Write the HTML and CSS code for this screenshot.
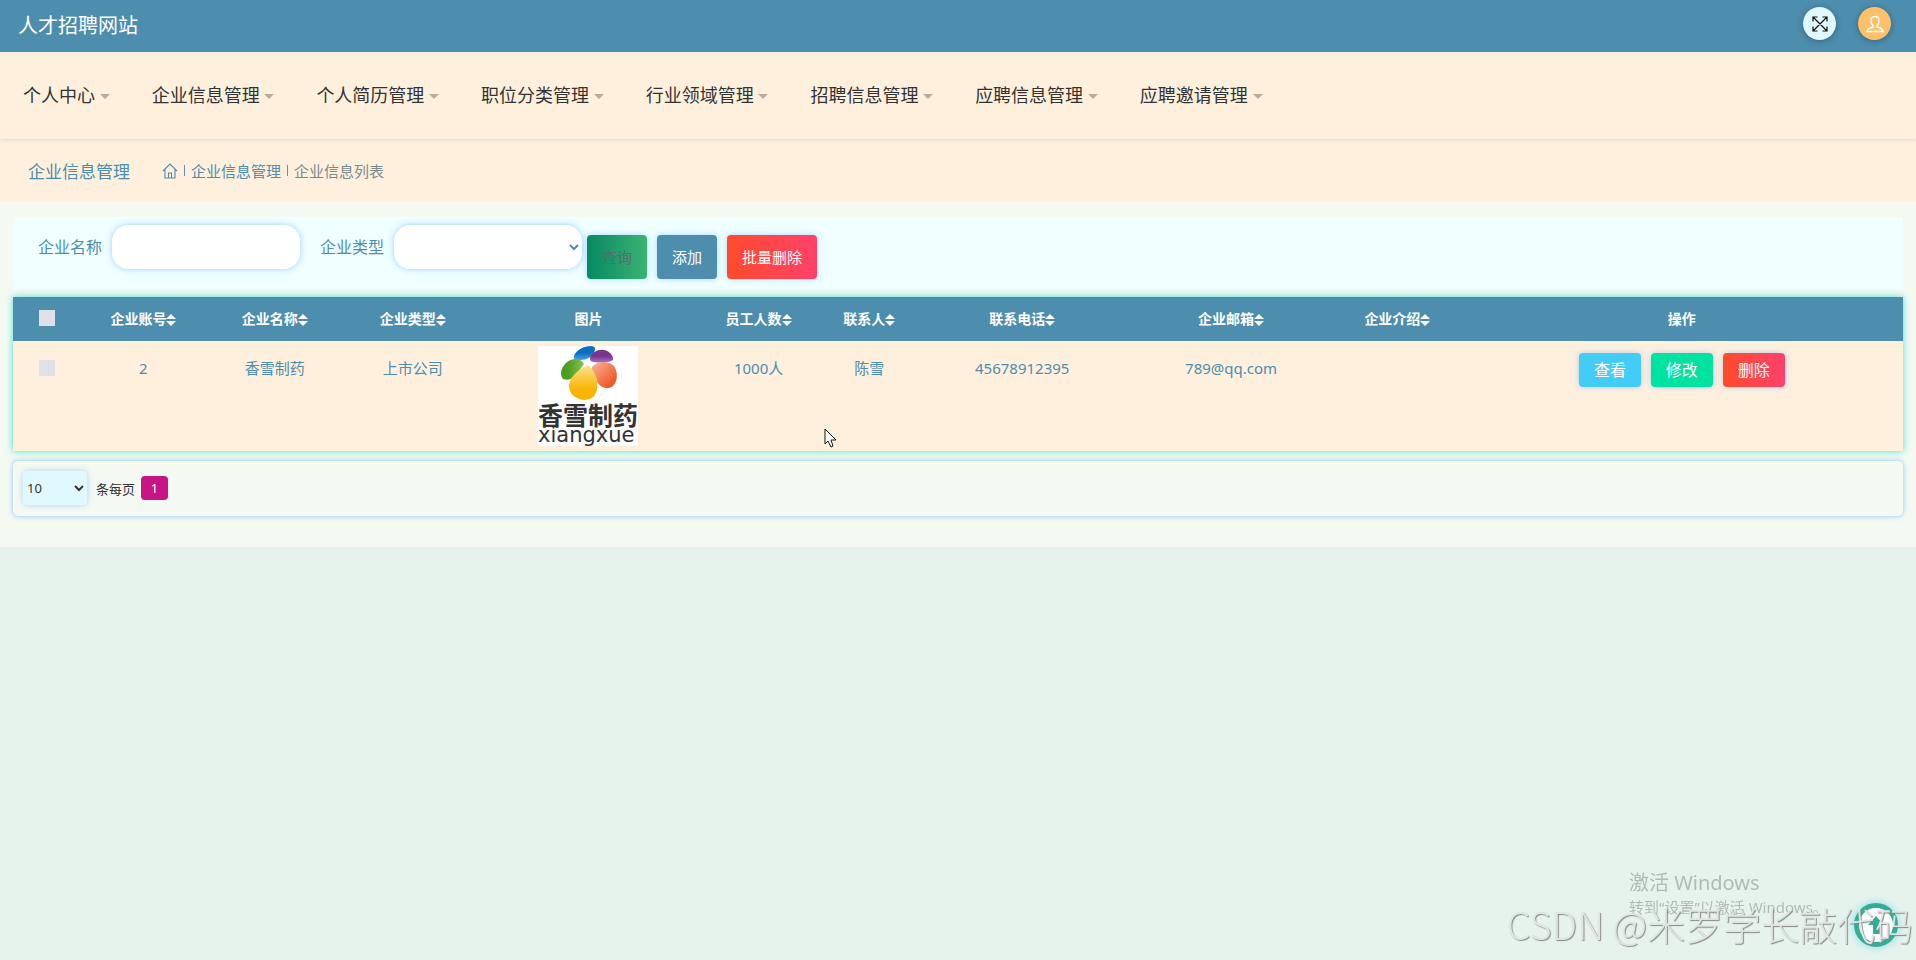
FILE: index.html
```html
<!DOCTYPE html>
<html lang="zh-CN">
<head>
	<meta charset="UTF-8">
	<meta name="viewport" content="width=device-width, initial-scale=1.0">
	<title>人才招聘网站</title>
	<link rel="stylesheet" href="styles.css">
</head>
<body>

	<header class="topbar">
		<h1 class="brand">人才招聘网站</h1>
		<div class="tools">
			<button class="tool tool-full" aria-label="全屏">
				<svg width="16" height="16" viewBox="0 0 16 16" fill="none" stroke="#111" stroke-width="1.2">
					<path d="M1 1L15 15M15 1L1 15M1 5.500V1H5.500M10.500 1H15V5.500M15 10.500V15H10.500M5.500 15H1V10.500" />
				</svg>
			</button>
			<button class="tool tool-user" aria-label="用户">
				<svg width="18" height="18" viewBox="0 0 18 18" fill="none" stroke="#fff" stroke-width="1.4">
					<path d="M7 10.500C5.500 9 5 7.500 5 5.500C5 3 6.500 1.500 9 1.500S13 3 13 5.500C13 7.500 12.500 9 11 10.500V12L15.500 13.500L17 16.500H1L2.500 13.500L7 12Z" />
				</svg>
			</button>
		</div>
	</header>

	<nav class="menu">
		<a href="#">个人中心 <span class="caret"></span></a>
		<a href="#">企业信息管理 <span class="caret"></span></a>
		<a href="#">个人简历管理 <span class="caret"></span></a>
		<a href="#">职位分类管理 <span class="caret"></span></a>
		<a href="#">行业领域管理 <span class="caret"></span></a>
		<a href="#">招聘信息管理 <span class="caret"></span></a>
		<a href="#">应聘信息管理 <span class="caret"></span></a>
		<a href="#">应聘邀请管理 <span class="caret"></span></a>
	</nav>

	<div class="crumbs">
		<h2>企业信息管理</h2>
		<a href="#" aria-label="首页">
			<svg width="16" height="16" viewBox="0 0 16 16" fill="none" stroke="#4d8dae" stroke-width="1.1">
				<path d="M1 8L8 1L15 8M3 6.500V15H13V6.500M6.500 15V10H9.500V15" />
			</svg>
		</a>
		<span class="sep"></span>
		<a href="#">企业信息管理</a>
		<span class="sep"></span>
		<span class="here">企业信息列表</span>
	</div>

	<main class="content">
		<form class="search">
			<label for="name">企业名称</label>
			<input type="text" id="name" class="field">
			<label for="type">企业类型</label>
			<select id="type" class="field"><option></option></select>
			<div class="search-buttons">
				<button type="button" class="btn query">查询</button>
				<button type="button" class="btn add">添加</button>
				<button type="button" class="btn del">批量删除</button>
			</div>
		</form>

		<table class="list">
			<colgroup>
				<col class="c-check"><col class="c-account"><col class="c-name"><col class="c-type">
				<col class="c-pic"><col class="c-staff"><col class="c-contact"><col class="c-phone">
				<col class="c-mail"><col class="c-intro"><col class="c-action">
			</colgroup>
			<thead>
				<tr>
					<th><input type="checkbox" aria-label="全选"></th>
					<th>企业账号<i class="sort"></i></th>
					<th>企业名称<i class="sort"></i></th>
					<th>企业类型<i class="sort"></i></th>
					<th>图片</th>
					<th>员工人数<i class="sort"></i></th>
					<th>联系人<i class="sort"></i></th>
					<th>联系电话<i class="sort"></i></th>
					<th>企业邮箱<i class="sort"></i></th>
					<th>企业介绍<i class="sort"></i></th>
					<th>操作</th>
				</tr>
			</thead>
			<tbody>
				<tr>
					<td><input type="checkbox" aria-label="选择"></td>
					<td>2</td>
					<td>香雪制药</td>
					<td>上市公司</td>
					<td class="pic">
						<svg width="100" height="100" viewBox="0 0 100 100">
							<defs>
								<linearGradient id="blue" x1="0" y1="0" x2="0" y2="1"><stop offset="0.5" stop-color="#0b6fc0" /><stop offset="1" stop-color="#4aa5dc" /></linearGradient>
								<linearGradient id="purple" x1="0" y1="0" x2="0" y2="1"><stop offset="0.5" stop-color="#783492" /><stop offset="1" stop-color="#a877bb" /></linearGradient>
								<linearGradient id="green" x1="0" y1="0" x2="1" y2="0"><stop offset="0.3" stop-color="#4c9e20" /><stop offset="1" stop-color="#8bc34f" /></linearGradient>
								<linearGradient id="red" x1="0" y1="0" x2="1" y2="1"><stop offset="0" stop-color="#f8b8a0" /><stop offset="0.8" stop-color="#ee5a26" /></linearGradient>
								<linearGradient id="gold" x1="0" y1="0" x2="0" y2="1"><stop offset="0" stop-color="#fbe08c" /><stop offset="0.7" stop-color="#f8b400" /></linearGradient>
							</defs>
							<rect width="100" height="100" fill="#fff" />
							<path d="M36 10C38 4 46 0 53 0C58 0 58 4 55 8C52 13 46 14 41 14C37 14 35 13 36 10Z" fill="url(#blue)" />
							<path d="M52 12C54 6 60 3 66 4C72 5 76 11 75 14C71 17 61 17 55 16C52 15 52 14 52 12Z" fill="url(#purple)" />
							<path d="M46 18C43 12 34 11 28 17C22 23 22 29 25 33C27 34 32 34 35 32C40 28 42 23 46 18Z" fill="url(#green)" />
							<path d="M54 21C59 15 70 14 76 20C80 26 80 35 75 40C70 44 63 42 60 37C57 31 52 27 54 21Z" fill="url(#red)" />
							<path d="M48 20C52 18 56 26 59 33C60 42 59 48 54 52C50 54 44 55 39 52C34 50 31 45 31 39C32 31 40 24 48 20Z" fill="url(#gold)" />
							<text x="0" y="79" class="logo-cn">香雪制药</text>
							<text x="0" y="96" class="logo-en">xiangxue</text>
						</svg>
					</td>
					<td>1000人</td>
					<td>陈雪</td>
					<td>45678912395</td>
					<td>789@qq.com</td>
					<td></td>
					<td class="actions">
						<button class="btn view">查看</button>
						<button class="btn edit">修改</button>
						<button class="btn del">删除</button>
					</td>
				</tr>
			</tbody>
		</table>

		<div class="pager">
			<select id="size"><option>10</option></select>
			<label for="size">条每页</label>
			<button class="page">1</button>
		</div>
	</main>

	<button class="to-top" aria-label="返回顶部">
		<svg width="16" height="18" viewBox="0 0 16 18" fill="#35ad96">
			<path d="M8 0L16 9H12V18H5V9H0Z" />
		</svg>
	</button>

	<div class="activate">
		<p>激活 Windows</p>
		<small>转到“设置”以激活 Windows。</small>
	</div>
	<div class="mark">CSDN @米罗学长敲代码</div>

	<svg class="cursor" width="13" height="20" viewBox="0 0 13 20" fill="#fff" stroke="#111">
		<path d="M1 1V16L4 13L7 19L9 18L7 12H12Z" />
	</svg>

</body>
</html>
```
FILE: styles.css
```css
* {
	box-sizing: border-box;
}

body {
	margin: 0;
	min-height: 100vh;
	background: #e6f3ec;
	color: #4d8dae;
	font-family: "Noto Sans", "Noto Sans CJK SC", sans-serif;
	font-size: 15px;
	overflow: hidden;
}

h1, h2, p {
	margin: 0;
	font-weight: normal;
}

a {
	color: inherit;
	text-decoration: none;
}

button, input, select {
	font-family: inherit;
	border: none;
}

/* header */
.topbar {
	display: flex;
	justify-content: space-between;
	height: 52px;
	padding: 7px 25px 0 18px;
	background: #4d8dae;
}

.brand {
	color: #fff;
	font-size: 20px;
	line-height: 38px;
}

.tools {
	display: flex;
	gap: 22px;
}

.tool {
	display: flex;
	align-items: center;
	justify-content: center;
	width: 33px;
	height: 33px;
	padding: 0;
	border-radius: 50%;
	box-shadow: 0 1px 6px rgba(0, 0, 0, 0.3);
}

.tool-full {
	background: #e0f8ff;
}

.tool-user {
	background: #ffc069;
}

.menu {
	position: relative;
	display: flex;
	gap: 42px;
	padding: 0 23px;
	line-height: 87px;
	font-size: 18px;
	color: #333;
	background: #fff0de;
	box-shadow: 0 1px 4px rgba(77, 141, 174, 0.2);
}

.caret {
	display: inline-block;
	vertical-align: middle;
	margin-bottom: 2px;
	border: 5px solid transparent;
	border-top-color: #b9ac9d;
	border-bottom: none;
}

.crumbs {
	display: flex;
	align-items: center;
	height: 63px;
	padding: 0 28px;
	background: #fff0de;
}

.crumbs h2 {
	margin-right: 32px;
	font-size: 17px;
}

.crumbs svg {
	display: block;
}

.sep {
	width: 1px;
	height: 11px;
	margin: 0 6px;
	background: #6f8f9c;
}

.here {
	color: #7d8a8c;
}

/* list page */
.content {
	padding: 15px 13px 31px;
	background: #f4f9f1;
}

.search {
	display: flex;
	align-items: flex-start;
	height: 72px;
	margin-bottom: 8px;
	padding: 8px 25px;
	background: #f0ffff;
}

.search label {
	font-size: 16px;
	line-height: 44px;
	margin-right: 10px;
}

.field {
	width: 188px;
	height: 44px;
	padding: 0 16px;
	color: #4d8dae;
	background: #fff;
	border-radius: 16px;
	box-shadow: 0 0 6px rgba(64, 158, 255, 0.5);
}

select.field {
	padding: 0;
}

input.field {
	margin-right: 20px;
}

.search-buttons {
	display: flex;
	gap: 10px;
	padding: 10px 5px;
}

.btn {
	height: 44px;
	padding: 0 15px 2px;
	color: #fff;
	font-size: 15px;
	border-radius: 4px;
	box-shadow: 0 0 6px rgba(64, 158, 255, 0.4);
}

.query {
	color: #596b70;
	background: linear-gradient(90deg, #068a63, #3cb371);
}

.add {
	background: #4d8dae;
}

.del {
	background: linear-gradient(90deg, #ff4b2b, #ff416c);
}

.list {
	width: 100%;
	table-layout: fixed;
	border-collapse: collapse;
	background: #fff0de;
	text-align: center;
	box-shadow: 0 0 7px #40e0d0;
}

.c-check { width: 3.6%; }
.c-account { width: 6.6%; }
.c-name { width: 7.3%; }
.c-type { width: 7.3%; }
.c-pic { width: 11.3%; }
.c-staff { width: 6.7%; }
.c-contact { width: 5%; }
.c-phone { width: 11.2%; }
.c-mail { width: 10.9%; }
.c-intro { width: 6.7%; }
.c-action { width: 23.4%; }

th {
	height: 44px;
	padding: 0 0 2px;
	color: #fff;
	font-size: 14px;
	white-space: nowrap;
	background: #4d8dae;
}

td {
	padding: 15px 0 0;
	line-height: 24px;
	vertical-align: top;
}

.list input {
	appearance: none;
	display: block;
	width: 16px;
	height: 16px;
	margin: 0 auto;
	background: #dee2e6;
}

.list td input {
	margin-top: 4px;
}

/* up and down triangles after a column title */
.sort {
	display: inline-flex;
	flex-direction: column;
	gap: 2px;
	vertical-align: middle;
}

.sort::before, .sort::after {
	content: "";
	border: 5px solid transparent;
}

.sort::before {
	border-top: none;
	border-bottom-color: #fff;
}

.sort::after {
	border-bottom: none;
	border-top-color: #fff;
}

.pic {
	padding: 5px 0;
}

.pic svg {
	display: block;
	margin: 0 auto;
}

.logo-cn {
	font: bold 25px "Noto Sans CJK SC", sans-serif;
	fill: #333;
}

.logo-en {
	font: 21px "DejaVu Sans", sans-serif;
	fill: #333;
}

.actions {
	padding-top: 12px;
}

.actions .btn {
	height: 34px;
	margin: 0 3px;
	font-size: 16px;
}

.view {
	background: #43cdf6;
}

.edit {
	background: #00e3a0;
}

.pager {
	display: flex;
	align-items: center;
	height: 55px;
	margin-top: 10px;
	padding: 0 10px 1px;
	font-size: 13px;
	color: #333;
	border-radius: 5px;
	box-shadow: 0 0 5px rgba(64, 158, 255, 0.6);
}

.pager select {
	width: 64px;
	height: 34px;
	margin-right: 9px;
	font-size: 13px;
	color: #333;
	background: #e0f8ff;
	border-radius: 4px;
	box-shadow: 0 0 6px rgba(64, 158, 255, 0.4);
}

.page {
	width: 27px;
	height: 24px;
	margin-left: 6px;
	padding: 0;
	color: #fff;
	font-size: 13px;
	background: #c71585;
	border-radius: 4px;
}

/* things floating over the page */
.to-top {
	position: fixed;
	right: 18px;
	bottom: 13px;
	display: flex;
	align-items: center;
	justify-content: center;
	width: 44px;
	height: 44px;
	padding: 0;
	background: #fff;
	border: 5px solid #35ad96;
	border-radius: 50%;
	box-shadow: 0 0 8px #7fdcee;
}

.activate {
	position: fixed;
	right: 87px;
	bottom: 41px;
	width: 200px;
	color: #b2bab6;
	white-space: nowrap;
}

.activate p {
	font-size: 20px;
	line-height: 24px;
}

.activate small {
	display: block;
	font-size: 15px;
	line-height: 24px;
}

.mark {
	position: fixed;
	right: 3px;
	bottom: 12px;
	font-family: "Noto Sans CJK SC", sans-serif;
	font-size: 38px;
	font-weight: 300;
	line-height: 48px;
	color: #dfe6e2;
	text-shadow: 1px 1px 1px #888;
}

.cursor {
	position: fixed;
	left: 43%;
	top: 428px;
}
```
